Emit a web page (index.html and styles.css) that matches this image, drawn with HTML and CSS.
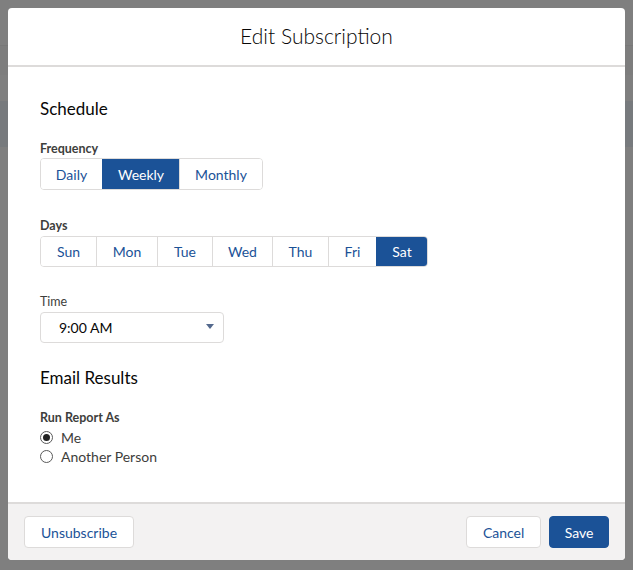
FILE: index.html
```html
<!DOCTYPE html>
<html>
<head>
<meta charset="utf-8">
<link rel="stylesheet" href="styles.css">
</head>
<body>
<div class="backdrop">
  <div class="modal">
    <header class="modal-header">
      <h2 class="modal-title">Edit Subscription</h2>
    </header>
    <div class="modal-body">
      <h3 class="section-title">Schedule</h3>
      <div class="field freq">
        <div class="label bold">Frequency</div>
        <div class="btn-group">
          <button class="seg w-daily">Daily</button>
          <button class="seg active w-weekly">Weekly</button>
          <button class="seg w-monthly">Monthly</button>
        </div>
      </div>
      <div class="field days">
        <div class="label bold">Days</div>
        <div class="btn-group">
          <button class="seg d-sun">Sun</button>
          <button class="seg d-mon">Mon</button>
          <button class="seg d-tue">Tue</button>
          <button class="seg d-wed">Wed</button>
          <button class="seg d-thu">Thu</button>
          <button class="seg d-fri">Fri</button>
          <button class="seg active d-sat">Sat</button>
        </div>
      </div>
      <div class="field time">
        <div class="label">Time</div>
        <div class="select">
          <span>9:00 AM</span>
          <svg class="caret" width="8" height="5" viewBox="0 0 8 5"><path d="M0 0h8L4 5z" fill="#54698d"/></svg>
        </div>
      </div>
      <h3 class="section-title email">Email Results</h3>
      <div class="field">
        <div class="label bold">Run Report As</div>
        <div class="radio-row"><span class="radio checked"></span><span>Me</span></div>
        <div class="radio-row"><span class="radio"></span><span>Another Person</span></div>
      </div>
    </div>
    <footer class="modal-footer">
      <button class="btn neutral">Unsubscribe</button>
      <div class="footer-right">
        <button class="btn neutral">Cancel</button>
        <button class="btn brand compact">Save</button>
      </div>
    </footer>
  </div>
</div>
</body>
</html>
```
FILE: styles.css
```css
* { box-sizing: border-box; }
html, body { margin: 0; padding: 0; }
body {
  width: 633px;
  height: 570px;
  overflow: hidden;
  font-family: "Lato", "Liberation Sans", sans-serif;
  color: #080707;
  background:
    linear-gradient(to bottom,
      #7f7f7f 0px, #7f7f7f 45px,
      #787878 45px, #787878 46px,
      #7d7d7d 46px, #7d7d7d 75px,
      #7f7f7f 75px, #7f7f7f 101px,
      #777a7d 101px, #777a7d 147px,
      #7f7f7f 147px);
}
.backdrop {
  padding: 8px 8px 10px 8px;
  height: 570px;
}
.modal {
  width: 617px;
  height: 552px;
  background: #fff;
  border-radius: 4px;
  display: flex;
  flex-direction: column;
  overflow: hidden;
}
.modal-header {
  height: 59px;
  border-bottom: 2px solid #dddbda;
  display: flex;
  align-items: center;
  justify-content: center;
  padding-bottom: 2px;
}
.modal-title {
  margin: 0;
  font-size: 21px;
  font-weight: 300;
  color: #080707;
}
.modal-body {
  flex: 1;
  padding: 32px 32px 0 32px;
}
.section-title {
  margin: 0;
  font-size: 17px;
  font-weight: 400;
  line-height: 20px;
  color: #080707;
}
.field { margin-top: 21px; }
.field.days { margin-top: 27px; }
.field.time { margin-top: 26px; }
.section-title.email { margin-top: 25px; }
.label {
  font-size: 12.5px;
  line-height: 18px;
  color: #3e3e3c;
  margin-bottom: 1px;
}
.freq .label { margin-bottom: 0; }
.label.bold { font-weight: 700; }
.btn-group {
  display: inline-flex;
  border: 1px solid #dddbda;
  border-radius: 4px;
  overflow: hidden;
  background: #fff;
}
.seg {
  font-family: inherit;
  font-size: 14px;
  color: #1b5297;
  background: #fff;
  border: 0;
  border-left: 1px solid #dddbda;
  height: 30px;
  padding: 0;
  margin: 0;
}
.days .seg { height: 29px; }
.seg:first-child { border-left: 0; }
.seg.active { background: #1b5297; color: #fff; border-left-color: #1b5297; }
.w-daily { width: 61px; }
.w-weekly { width: 77px; }
.w-monthly { width: 83px; }
.d-sun { width: 55px; }
.d-mon { width: 61px; }
.d-tue { width: 55px; }
.d-wed { width: 60px; }
.d-thu { width: 56px; }
.d-fri { width: 48px; }
.d-sat { width: 51px; }
.select {
  width: 184px;
  height: 31px;
  border: 1px solid #dddbda;
  border-radius: 4px;
  display: flex;
  align-items: center;
  justify-content: space-between;
  padding: 0 9px 0 18px;
  font-size: 14px;
  color: #080707;
}
.caret { margin-top: -2px; }
.radio-row {
  display: flex;
  align-items: center;
  height: 19px;
  font-size: 14px;
  color: #3e3e3c;
}
.radio {
  width: 13px;
  height: 13px;
  border: 1px solid #5a5a5a;
  border-radius: 50%;
  margin-right: 8px;
  position: relative;
  background: #fff;
}
.radio.checked::after {
  content: "";
  position: absolute;
  left: 2px; top: 2px;
  width: 7px; height: 7px;
  border-radius: 50%;
  background: #222;
}
.modal-footer {
  height: 58px;
  border-top: 2px solid #dddbda;
  background: #f3f2f2;
  display: flex;
  align-items: center;
  justify-content: space-between;
  padding: 0 16px;
}
.footer-right { display: flex; gap: 8px; }
.btn {
  font-family: inherit;
  font-size: 14px;
  height: 32px;
  border-radius: 4px;
  padding: 0 16px;
  margin: 0;
}
.btn.brand.compact { padding: 0 14.5px; }
.btn.neutral { background: #fff; border: 1px solid #dddbda; color: #1b5297; }
.btn.brand { background: #1b5297; border: 1px solid #1b5297; color: #fff; }
```
